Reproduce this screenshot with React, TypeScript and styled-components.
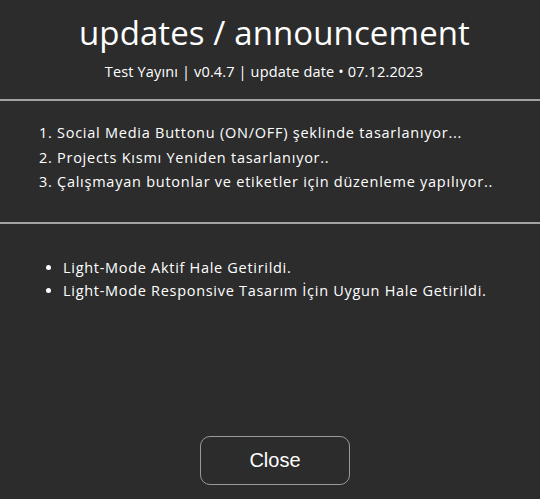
import React from "react";
import styled, { createGlobalStyle } from "styled-components";

const Global = createGlobalStyle`
  html, body { margin: 0; padding: 0; background: #2c2c2c; }
  body { font-family: "Open Sans", "Noto Sans", sans-serif; color: #ffffff; }
`;

const Page = styled.div`
  min-height: 499px;
  display: flex;
  flex-direction: column;
  background: #2c2c2c;
  box-sizing: border-box;
`;

const Header = styled.header`
  text-align: center;
  padding-top: 12px;
  padding-bottom: 17px;
`;

const Title = styled.h1`
  margin: 0;
  padding-left: 9px;
  font-size: 33px;
  font-weight: 400;
  line-height: 42px;
  letter-spacing: 0.1px;
`;

const Subtitle = styled.p`
  margin: 8px 0 0;
  padding-right: 12px;
  font-size: 14.5px;
  line-height: 20px;
  letter-spacing: 0.15px;
`;

const Divider = styled.hr`
  margin: 0;
  border: none;
  height: 2px;
  background: #a3a3a3;
`;

const Section = styled.section<{ $top: number; $bottom: number }>`
  padding: ${(p) => p.$top}px 0 ${(p) => p.$bottom}px;
`;

const OrderedList = styled.ol`
  margin: 0;
  padding-left: 57px;
  font-size: 14.5px;
  line-height: 24.5px;
  letter-spacing: 0.75px;
`;

const BulletList = styled.ul`
  margin: 0;
  padding-left: 63px;
  font-size: 14.5px;
  line-height: 23px;
  letter-spacing: 0.7px;
`;

const Item = styled.li``;

const Footer = styled.footer`
  margin-top: auto;
  display: flex;
  justify-content: center;
  padding-left: 10px;
  padding-bottom: 14px;
`;

const CloseButton = styled.button`
  width: 150px;
  height: 49px;
  background: transparent;
  border: 1.5px solid #9a9a9a;
  border-radius: 10px;
  color: #ffffff;
  font-family: "Liberation Sans", Arial, sans-serif;
  font-size: 20px;
  cursor: pointer;
`;

export default function App() {
  return (
    <>
      <Global />
      <Page>
        <Header>
          <Title>updates / announcement</Title>
          <Subtitle>Test Yayını | v0.4.7 | update date • 07.12.2023</Subtitle>
        </Header>
        <Divider />
        <Section $top={20} $bottom={27}>
          <OrderedList>
            <Item>Social Media Buttonu (ON/OFF) şeklinde tasarlanıyor...</Item>
            <Item>Projects Kısmı Yeniden tasarlanıyor..</Item>
            <Item>Çalışmayan butonlar ve etiketler için düzenleme yapılıyor..</Item>
          </OrderedList>
        </Section>
        <Divider />
        <Section $top={32} $bottom={0}>
          <BulletList>
            <Item>Light-Mode Aktif Hale Getirildi.</Item>
            <Item>Light-Mode Responsive Tasarım İçin Uygun Hale Getirildi.</Item>
          </BulletList>
        </Section>
        <Footer>
          <CloseButton>Close</CloseButton>
        </Footer>
      </Page>
    </>
  );
}
